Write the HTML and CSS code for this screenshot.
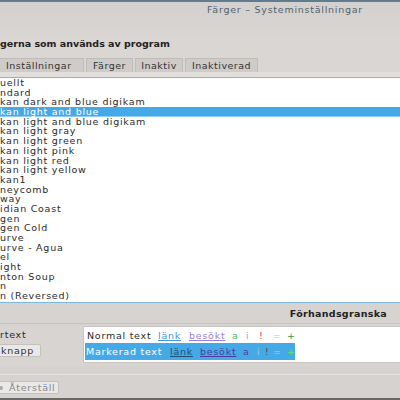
FILE: index.html
```html
<!DOCTYPE html>
<html lang="sv">
<head>
<meta charset="utf-8">
<link rel="stylesheet" href="styles.css">
</head>
<body>
<div class="window">
  <div class="titlebar"><span class="title">Färger – Systeminställningar</span></div>
  <div class="heading">gerna som används av program</div>
  <div class="tabs">
    <div class="tab first">Inställningar</div>
    <div class="tab t2">Färger</div>
    <div class="tab t3">Inaktiv</div>
    <div class="tab t4">Inaktiverad</div>
  </div>
  <div class="strip"></div>
  <ul class="list">
    <li>uellt</li>
    <li>ndard</li>
    <li>kan dark and blue digikam</li>
    <li class="sel">kan light and blue</li>
    <li>kan light and blue digikam</li>
    <li>kan light gray</li>
    <li>kan light green</li>
    <li>kan light pink</li>
    <li>kan light red</li>
    <li>kan light yellow</li>
    <li>kan1</li>
    <li>neycomb</li>
    <li>way</li>
    <li>idian Coast</li>
    <li>gen</li>
    <li>gen Cold</li>
    <li>urve</li>
    <li>urve - Agua</li>
    <li>el</li>
    <li>ight</li>
    <li>nton Soup</li>
    <li>n</li>
    <li>n (Reversed)</li>
  </ul>
  <div class="previewhead"><span>Förhandsgranska</span></div>
  <div class="preview">
    <div class="left">
      <div class="label">rtext</div>
      <div class="btn small">knapp</div>
    </div>
    <div class="box">
      <div class="prow normrow"><span class="t">Normal text</span><span class="lnk">länk</span><span class="vis">besökt</span><span class="a">a</span><span class="i">i</span><span class="x">!</span><span class="eq">=</span><span class="pl">+</span></div>
      <div class="prow selrow"><span class="t">Markerad text</span><span class="lnk">länk</span><span class="vis">besökt</span><span class="a">a</span><span class="i">i</span><span class="x">!</span><span class="eq">=</span><span class="pl">+</span></div>
    </div>
  </div>
  <div class="footer">
    <div class="btn reset"><span class="ico"></span>Återställ</div>
  </div>
</div>
</body>
</html>
```
FILE: styles.css
```css
html, body {
  margin: 0;
  padding: 0;
}
body {
  width: 400px;
  height: 400px;
  overflow: hidden;
  background: #d6d2d0;
  font-family: "DejaVu Sans", Lato, sans-serif;
  font-size: 9.5px;
  letter-spacing: 0.75px;
  color: #2a2a2a;
}
.window {
  width: 400px;
  height: 400px;
  display: flex;
  flex-direction: column;
  border-top: 2px solid #5f7c90;
  border-bottom: 2px solid #6a6866;
  box-sizing: border-box;
  background: linear-gradient(#d4d0ce, #dad6d4 40px, #d6d2d0);
}
.titlebar {
  height: 15px;
  display: flex;
  align-items: center;
  padding-left: 207px;
  color: #53636a;
}
.heading {
  margin-top: 20px;
  height: 14px;
  line-height: 14px;
  font-weight: bold;
  letter-spacing: 0;
  color: #222;
}
.tabs {
  margin-top: 7px;
  display: flex;
  height: 14px;
  gap: 2px;
}
.tab {
  box-sizing: border-box;
  height: 14px;
  line-height: 13px;
  background: #cfcbc9;
  border: 1px solid #c0bcba;
  border-bottom: none;
  color: #333;
  letter-spacing: 0.5px;
  text-align: center;
}
.tab.first {
  margin-left: -2px;
  width: 86px;
  text-align: left;
  padding-left: 7px;
}
.tab.t2 { width: 47px; }
.tab.t3 { width: 48px; }
.tab.t4 { width: 73px; }
.strip {
  height: 5px;
  background: #e2dedc;
}
.list {
  list-style: none;
  margin: 0;
  padding: 0;
  background: #fff;
  border-top: 1px solid #7db8dc;
  border-bottom: 1px solid #7db8dc;
  height: 226px;
  box-sizing: border-box;
}
.list li {
  height: 9.7px;
  line-height: 9.7px;
  color: #2b2b2b;
  white-space: nowrap;
}
.list li.sel {
  background: #44a9e6;
  color: #fff;
  box-shadow: inset 0 -1px 0 #8fcdf2;
}
.previewhead {
  height: 20px;
  display: flex;
  align-items: center;
  justify-content: flex-end;
  padding-right: 13px;
  font-weight: bold;
  letter-spacing: 0.3px;
  color: #222;
  border-bottom: 1px solid #c6c2c0;
}
.preview {
  display: flex;
  height: 42px;
  padding-top: 2px;
  box-sizing: border-box;
  background: #d8d4d2;
}
.left {
  width: 83px;
  display: flex;
  flex-direction: column;
}
.label {
  height: 12px;
  line-height: 12px;
  margin-top: 3px;
}
.btn {
  box-sizing: border-box;
  background: #ebe9e8;
  border: 1px solid #c4c0be;
  border-radius: 2px;
  color: #333;
}
.btn.small {
  margin-top: 3px;
  margin-left: -2px;
  width: 43px;
  height: 13px;
  line-height: 11px;
  padding-left: 2px;
}
.box {
  flex: 1;
  background: #fff;
  border: 1px solid #c8c4c2;
  border-right: none;
  height: 37px;
  box-sizing: border-box;
  padding: 1px 0 0 1px;
}
.prow {
  height: 15px;
  display: flex;
  align-items: center;
  white-space: nowrap;
}
.prow span {
  flex: none;
}
.normrow {
  padding-left: 2px;
}
.normrow .t { width: 71px; }
.normrow .lnk { width: 31px; }
.normrow .vis { width: 43px; }
.normrow .a { width: 14px; }
.normrow .i { width: 13px; }
.normrow .x { width: 14px; }
.normrow .eq { width: 14px; }
.prow.selrow {
  background: #44a9e6;
  width: 210px;
  height: 17px;
  padding-left: 1px;
  box-sizing: border-box;
}
.selrow .t { width: 84px; }
.selrow .lnk { width: 30px; }
.selrow .vis { width: 43px; }
.selrow .a { width: 14px; }
.selrow .i { width: 8px; }
.selrow .x { width: 8px; }
.selrow .eq { width: 14px; }
.prow .t { color: #2b2b2b; }
.prow .lnk { color: #3b9ae1; text-decoration: underline; }
.prow .vis { color: #9c7fd6; text-decoration: underline; }
.prow .a { color: #3fbf4f; }
.prow .i { color: #aaa; }
.prow .x { color: #d9384a; }
.prow .eq { color: #f1bb7c; }
.prow .pl { color: #2f9a46; }
.selrow .t { color: #fff; }
.selrow .lnk { color: #1d4f77; }
.selrow .vis { color: #4a3c9e; }
.selrow .a { color: #5a3e94; }
.selrow .i { color: #8fcff5; }
.selrow .x { color: #8c2b3e; }
.selrow .eq { color: #9fe0a0; }
.selrow .pl { color: #55e86a; }
.footer {
  flex: 1;
  border-top: 1px solid #e6e2e0;
  margin-top: 8px;
  padding-top: 6px;
  box-sizing: border-box;
}
.btn.reset {
  width: 62px;
  height: 13px;
  margin-left: -3px;
  display: flex;
  align-items: center;
  gap: 6px;
  color: #888;
}
.ico {
  width: 4px;
  height: 4px;
  border-radius: 50%;
  background: #aaa;
  margin-left: 1px;
}
```
